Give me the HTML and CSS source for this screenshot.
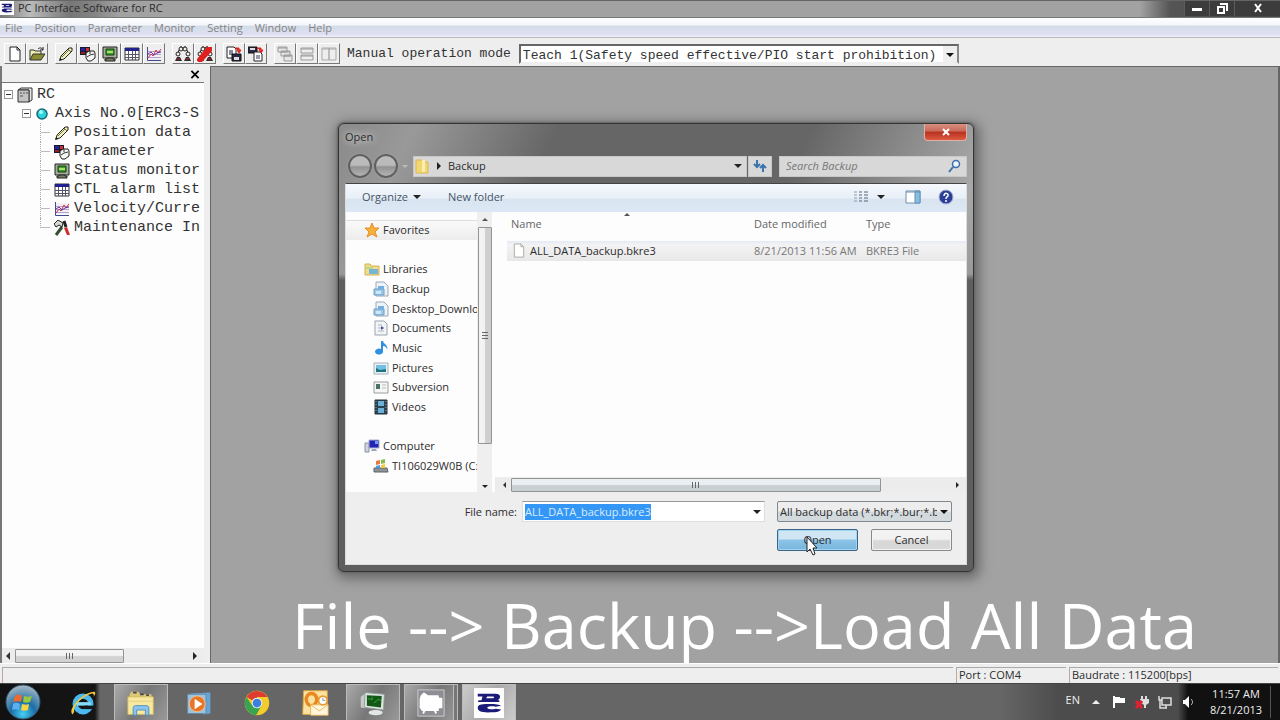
FILE: index.html
```html
<!DOCTYPE html>
<html lang="en">
<head>
    <meta charset="UTF-8">
    <title>PC Interface Software for RC</title>
    <link rel="stylesheet" href="styles.css">
</head>
<body>
    <!-- Icons used both in the toolbar and in the tree -->
    <svg class="sprite" aria-hidden="true">
        <symbol id="i-pencil" viewBox="0 0 16 16">
            <path d="M2 14l1-4 8-8h3v3l-8 8z" fill="#f2f0c0" stroke="#222"/>
            <path d="M4 11l7-7M10 3l3 3" stroke="#77763a" fill="none"/>
            <path d="M1 15l1-3 2 2z" fill="#111"/>
        </symbol>
        <symbol id="i-param" viewBox="0 0 16 16">
            <path d="M0 1h10v8H0z" fill="#181830"/>
            <path d="M1 2h4v3H1z" fill="#24249c"/><path d="M6 2h3v3H6z" fill="#d23030"/><path d="M1 6h4v2H1z" fill="#902020"/>
            <path d="M6 7l3-2h5l1 2v5l-4 3H8l-2-3z" fill="#f6f6f2" stroke="#222"/>
            <path d="M7 11l3-2 4-1M10 5v3" stroke="#333" fill="none"/>
        </symbol>
        <symbol id="i-monitor" viewBox="0 0 16 16">
            <path d="M1 1h14v11H1z" fill="#a9ad9c" stroke="#222"/>
            <path d="M4 3h8v6H4z" fill="#3fa02c" stroke="#123c10"/>
            <path d="M5 5h6v2H5z" fill="#a8e070"/>
            <path d="M5 12h6v1h2v2H3v-2h2z" fill="#7b7f60" stroke="#222"/>
        </symbol>
        <symbol id="i-table" viewBox="0 0 16 16">
            <path d="M1 2h14v12H1z" fill="#fff" stroke="#333"/>
            <path d="M1 2h14v3H1z" fill="#22228c"/>
            <path d="M1 8.500h14M1 11.500h14M4.500 5v9M8.500 5v9M11.500 5v9" stroke="#556" fill="none"/>
        </symbol>
        <symbol id="i-graph" viewBox="0 0 16 16">
            <path d="M1 2h14v11H1z" fill="#f3eef6"/>
            <path d="M1 5.500h14M1 8.500h14M1 11.500h14" stroke="#b6a4c8" fill="none"/>
            <path d="M1.500 1v13.500H15" stroke="#444a90" fill="none"/>
            <path d="M2 12l3-4 2 2 3-6 2 3 3-4" stroke="#d03048" fill="none"/>
            <path d="M2 8l3-2 3 3 3-2 4-1" stroke="#5a3aa8" fill="none"/>
        </symbol>
        <symbol id="i-robots" viewBox="0 0 16 16">
            <g fill="#f4f0e8" stroke="#222"><path d="M5 1h2v3H4l-1 3 1 2M11 1H9v3h3l1 3-1 2"/><circle cx="6" cy="3" r="2"/><circle cx="10" cy="3" r="2"/><circle cx="3" cy="8" r="2"/><circle cx="13" cy="8" r="2"/></g>
            <path d="M0 15l2-4h3l2 4zM9 15l2-4h3l2 4z" fill="#2a2a2a"/>
            <path d="M2 13h3M11 13h3" stroke="#c23" fill="none"/>
        </symbol>
        <symbol id="i-library" viewBox="0 0 16 16">
            <path d="M3 1h8l4 4v10H3z" fill="#eef3f8" stroke="#9aa9b8"/>
            <path d="M1 8h10v6H1z" fill="#9cc8ea" stroke="#6f9fc6"/>
            <path d="M5 5h6v3H5z" fill="#74aede"/><path d="M3 10h5v3H3z" fill="#cfe6f7"/>
        </symbol>
        <symbol id="i-rc" viewBox="0 0 32 32">
            <path d="M0 0h32v32H0z" fill="#fff"/>
            <path d="M4 6h19c6 0 6 5 2 7h2v2H4l1-2h3l1-4H4zM14 9l-1 2h7c2 0 2-2 0-2z" fill="#1a1a78" fill-rule="evenodd"/>
            <path d="M29 19c-3-2-9-2-14-2-8 0-11 1-11 4s3 5 11 5 11 0 14-3l-6-1c-2 1-8 1-9-1 1-2 7-2 9-1z" fill="#1a1a78"/>
        </symbol>
    </svg>

    <header class="title-bar">
        <svg class="app-icon" aria-hidden="true"><use href="#i-rc"/></svg>
        <h1>PC Interface Software for RC</h1>
        <div class="window-buttons">
            <button type="button" aria-label="Minimize"><svg viewBox="0 0 12 12"><path d="M1 5h10v3H1z" fill="#fff"/></svg></button>
            <button type="button" aria-label="Restore"><svg viewBox="0 0 12 12"><path d="M4 1h7v7M2 4h6v6H2z" stroke="#fff" stroke-width="2" fill="none"/></svg></button>
            <button type="button" class="wide" aria-label="Close"><svg viewBox="0 0 12 12"><path d="M3 1l6 8M9 1l-6 8" stroke="#fff" stroke-width="2" fill="none"/></svg></button>
        </div>
    </header>

    <nav class="menu-bar">
        <a href="#">File</a>
        <a href="#">Position</a>
        <a href="#">Parameter</a>
        <a href="#">Monitor</a>
        <a href="#">Setting</a>
        <a href="#">Window</a>
        <a href="#">Help</a>
    </nav>

    <div class="toolbar">
        <div class="tool-group">
            <button type="button" aria-label="New"><svg viewBox="0 0 16 16"><path d="M3 1h7l3 3v11H3z" fill="#fff" stroke="#222"/><path d="M10 1v3h3" fill="none" stroke="#222"/></svg></button>
            <button type="button" aria-label="Open file"><svg viewBox="0 0 16 16"><path d="M1 14V4h4l1 1h6v3" fill="#eeeeb0" stroke="#333"/><path d="M1 14l3-6h12l-4 6z" fill="#8a8a30" stroke="#333"/><path d="M9 3c2-2 4-1 5 1m0-3v3h-3" stroke="#222" fill="none"/></svg></button>
        </div>
        <div class="tool-group">
            <button type="button" aria-label="Position data"><svg><use href="#i-pencil"/></svg></button>
            <button type="button" aria-label="Parameter"><svg><use href="#i-param"/></svg></button>
            <button type="button" aria-label="Status monitor"><svg><use href="#i-monitor"/></svg></button>
            <button type="button" aria-label="Alarm list"><svg><use href="#i-table"/></svg></button>
            <button type="button" aria-label="Velocity"><svg><use href="#i-graph"/></svg></button>
        </div>
        <div class="tool-group">
            <button type="button" aria-label="Connect axes"><svg><use href="#i-robots"/></svg></button>
            <button type="button" aria-label="Disconnect axes"><svg viewBox="0 0 16 16"><use href="#i-robots"/><path d="M0 13L10 1h5v4L5 16H1z" fill="#e02020"/></svg></button>
        </div>
        <div class="tool-group">
            <button type="button" aria-label="Backup"><svg viewBox="0 0 16 16"><path d="M1 1h7l2 2v9H1z" fill="#fff" stroke="#222"/><path d="M3 4h4v5H3z" fill="#889"/><path d="M6 8h9v7H6z" fill="#2a2a48" stroke="#111"/><path d="M8 11h5v3H8z" fill="#ddd"/><path d="M9 2h4v3M11 4l2 3 2-3z" stroke="#d22" fill="#d22"/></svg></button>
            <button type="button" aria-label="Restore backup"><svg viewBox="0 0 16 16"><path d="M0 1h9v6H0z" fill="#2a2a48" stroke="#111"/><path d="M2 2h5v2H2z" fill="#ddd"/><path d="M6 6h6l2 2v7H6z" fill="#fff" stroke="#222"/><path d="M8 9h4v4H8z" fill="#99a"/><path d="M9 2h4v3M11 4l2 3 2-3z" stroke="#d22" fill="#d22"/></svg></button>
        </div>
        <div class="tool-group">
            <button type="button" aria-label="Cascade"><svg viewBox="0 0 16 16" fill="#e6e6e6" stroke="#999"><path d="M1 1h9v5H1zM4 5h9v5H4zM7 9h8v6H7z"/><path d="M1 2h9M4 6h9M7 10h8"/></svg></button>
            <button type="button" aria-label="Tile horizontally"><svg viewBox="0 0 16 16" fill="#eee" stroke="#999"><path d="M2 2h12v5H2zM2 9h12v5H2z"/><path d="M2 3h12M2 10h12"/></svg></button>
            <button type="button" aria-label="Tile vertically"><svg viewBox="0 0 16 16" fill="#eee" stroke="#aaa"><path d="M1 2h7v12H1zM8 2h7v12H8z"/><path d="M1 3h14"/></svg></button>
        </div>
        <label class="mode-label" for="mode">Manual operation mode</label>
        <select id="mode" class="mode-select">
            <option>Teach 1(Safety speed effective/PIO start prohibition)</option>
        </select>
    </div>

    <main class="workspace">
        <aside class="tree-panel">
            <div class="tree-head">
                <button type="button" class="tree-close" aria-label="Close panel"><svg viewBox="0 0 10 10"><path d="M1 1l8 8M9 1L1 9" stroke="#000" stroke-width="2"/></svg></button>
            </div>
            <div class="tree">
                <ul>
                    <li>
                        <div class="node"><span class="toggle"></span><svg viewBox="0 0 16 16"><path d="M1 3l3-2h11v12l-3 2V3z" fill="#e8e8e8" stroke="#333"/><path d="M1 3h11v12H1z" fill="#c4c4c4" stroke="#333"/><path d="M3 6h2M6 6h2M9 6h2M3 9h3" stroke="#555"/></svg><span>RC</span></div>
                        <ul>
                            <li>
                                <div class="node"><span class="toggle"></span><svg viewBox="0 0 16 16"><circle cx="7" cy="8" r="5" fill="#2cd4dc" stroke="#146a78" stroke-width="1.500"/><circle cx="6" cy="6" r="2" fill="#a6fafc"/></svg><span>Axis No.0[ERC3-S</span></div>
                                <ul class="leaves">
                                    <li class="node"><svg><use href="#i-pencil"/></svg><span>Position data</span></li>
                                    <li class="node"><svg><use href="#i-param"/></svg><span>Parameter</span></li>
                                    <li class="node"><svg><use href="#i-monitor"/></svg><span>Status monitor</span></li>
                                    <li class="node"><svg><use href="#i-table"/></svg><span>CTL alarm list</span></li>
                                    <li class="node"><svg><use href="#i-graph"/></svg><span>Velocity/Curre</span></li>
                                    <li class="node"><svg viewBox="0 0 16 16"><path d="M2 15l6-8" stroke="#345030" stroke-width="3"/><path d="M0 4l4-4 5 3-1 4-3-2-3 2z" fill="#d8d8d0" stroke="#222"/><path d="M10 1l2 6" stroke="#222" stroke-width="3"/><path d="M10 8l3-1 3 8h-3z" fill="#d02c28"/></svg><span>Maintenance In</span></li>
                                </ul>
                            </li>
                        </ul>
                    </li>
                </ul>
            </div>
            <div class="scroll-h tree-scroll">
                <span class="arrow left"></span>
                <div class="track"><div class="thumb"></div></div>
                <span class="arrow right"></span>
            </div>
        </aside>
        <section class="mdi">
            <p class="caption">File --&gt; Backup --&gt;Load All Data</p>
        </section>
    </main>

    <footer class="status-bar">
        <span class="cell grow"></span>
        <span class="cell port">Port : COM4</span>
        <span class="cell baud">Baudrate : 115200[bps]</span>
    </footer>

    <div class="taskbar">
        <button type="button" class="start" aria-label="Start">
            <svg viewBox="0 0 36 36">
                <defs><radialGradient id="orb" cx=".5" cy=".85" r=".8"><stop offset="0" stop-color="#45d0f6"/><stop offset=".45" stop-color="#1b6da6"/><stop offset="1" stop-color="#9db4c2"/></radialGradient></defs>
                <circle cx="18" cy="18" r="17" fill="url(#orb)" stroke="#355468"/>
                <path d="M10 12c3-2 5-2 7 0l-1 6c-3-1-5-1-8 0z" fill="#ea6a30"/><path d="M19 12c3 1 5 1 8 0l-2 6c-2 1-5 1-7 0z" fill="#98c83c"/>
                <path d="M8 20c3-2 5-1 7 0l-1 6c-3-1-5-1-7 0z" fill="#5cb0ee"/><path d="M17 20c3 1 5 1 7 0l-1 6c-2 1-5 1-7 0z" fill="#fad440"/>
            </svg>
        </button>
        <button type="button" class="task" aria-label="Internet Explorer"><svg viewBox="0 0 32 32"><circle cx="16" cy="17" r="9" fill="none" stroke="#4cb8ee" stroke-width="6"/><path d="M9 15h16v4H9z" fill="#86dcfa"/><path d="M18 19h12v4H18z" fill="#15191c"/><path d="M4 29C-2 24 14 4 29 3c2 1 1 3-1 6 1-3 0-4-2-4C15 8 4 20 6 26z" fill="#f0c83c"/></svg></button>
        <button type="button" class="task open" aria-label="Windows Explorer"><svg viewBox="0 0 32 32"><path d="M3 6l2-3h8l2 3h13v21H3z" fill="#dcc878"/><path d="M1 9h29v20H1z" fill="#f7e9a0" stroke="#d2b858"/><path d="M1 14h29" stroke="#e2cd7c"/><path d="M7 30v-8c0-2 1-3 3-3h12c2 0 3 1 3 3v8h-4v-6H11v6z" fill="#88c4ee" stroke="#4c88c0"/><path d="M7 4h4M15 6h4M22 7h3" stroke="#444" stroke-width="2"/></svg></button>
        <button type="button" class="task" aria-label="Media Player"><svg viewBox="0 0 32 32"><path d="M6 5l23-1v24l-8 1z" fill="#68a4d4"/><path d="M3 6h21v22H3z" fill="#9cc4de" stroke="#6088a8"/><circle cx="14" cy="17" r="9" fill="#e87424" stroke="#f8c090"/><path d="M11 11l9 6-9 6z" fill="#fff"/></svg></button>
        <button type="button" class="task" aria-label="Chrome"><svg viewBox="0 0 32 32"><circle cx="16" cy="16" r="14" fill="#f6cc2c"/><path d="M16 16L4 9A14 14 0 0 1 28 9H16z" fill="#de3c30"/><path d="M4 9A14 14 0 0 0 15 30l6-11-5-3-6 2z" fill="#38a450"/><circle cx="16" cy="16" r="6" fill="#f4f4f4"/><circle cx="16" cy="16" r="5" fill="#3c80dc"/></svg></button>
        <button type="button" class="task" aria-label="Outlook"><svg viewBox="0 0 32 32"><path d="M3 2h27v27H2z" fill="#fbe2a0" stroke="#e4a83c"/><ellipse cx="12" cy="12" rx="6" ry="7" fill="none" stroke="#e88820" stroke-width="4"/><path d="M11 18h20v12H11z" fill="#fff6dc" stroke="#e8b454"/><path d="M11 18l10 7 10-7" fill="none" stroke="#e8b454"/><circle cx="25" cy="13" r="5" fill="#fff" stroke="#e49c34" stroke-width="2"/><path d="M25 10v3h3" stroke="#888" fill="none"/></svg></button>
        <button type="button" class="task open" aria-label="System monitor"><svg viewBox="0 0 32 32"><path d="M2 9l6-5v18l-6-1z" fill="#c8ccc8"/><path d="M7 4l22 2-1 18-22-3z" fill="#dfe4df" stroke="#899"/><path d="M9 7l17 1-1 13-16-2z" fill="#145818"/><path d="M10 11l5 1v-3M17 16l5-4 3 1" stroke="#30b040" fill="none"/><ellipse cx="19" cy="27" rx="8" ry="3" fill="#e4e8e4"/></svg></button>
        <button type="button" class="task open stacked" aria-label="Recorder"><svg viewBox="0 0 32 32"><path d="M1 1h30v30H1z" fill="#8e8e94" stroke="#d4d4d4"/><path d="M5 8l3-3 4 3h12v3h4v10h-4v3H6l-2-3v-9z" fill="#fff" stroke="#fff" stroke-linejoin="round" stroke-width="2"/><path d="M9 24l-2 4M20 24l2 4" stroke="#fff" stroke-width="2"/></svg></button>
        <button type="button" class="task open front" aria-label="PC Interface Software"><svg><use href="#i-rc"/></svg></button>

        <div class="tray">
            <span class="lang">EN</span>
            <svg viewBox="0 0 14 14"><path d="M3 9l4-4 4 4z" fill="#eee"/></svg>
            <svg viewBox="0 0 14 14"><path d="M1 1h2v12H1zM3 2h5v6H3zM8 3h5v5H8z" fill="#fff"/></svg>
            <svg viewBox="0 0 14 14"><path d="M6 1h2v3H6zM10 1h2v3h-2zM5 4h9v4l-3 2v3H9v-3L6 8z" fill="#ddd"/><path d="M1 6l6 7M7 6l-6 7" stroke="#e02030" stroke-width="3"/></svg>
            <svg viewBox="0 0 14 14"><path d="M4 3h9v7H4zM1 1v4h3M2 5v8h7M8 10v3" fill="none" stroke="#ddd" stroke-width="1.500"/></svg>
            <svg viewBox="0 0 14 14"><path d="M2 5h2l4-4v12L4 9H2z" fill="#fff"/><path d="M10 4c2 2 2 4 0 6" fill="none" stroke="#ccc"/></svg>
            <time class="clock" datetime="2013-08-21T11:57">11:57 AM<br>8/21/2013</time>
        </div>
    </div>

    <!-- Open dialog -->
    <form class="dialog" role="dialog" aria-labelledby="dialog-title">
        <div class="dialog-title">
            <h2 id="dialog-title">Open</h2>
            <button type="button" class="dialog-close" aria-label="Close"><svg viewBox="0 0 10 10"><path d="M2 2l6 6M8 2L2 8" stroke="#fff" stroke-width="2"/></svg></button>
        </div>
        <div class="dialog-nav">
            <button type="button" class="round" aria-label="Back"></button>
            <button type="button" class="round" aria-label="Forward"></button>
            <span class="arrow down faint"></span>
            <div class="address">
                <svg viewBox="0 0 16 16"><path d="M2 2h6l1 2h5v11H2z" fill="#f2d674" stroke="#dcb850"/><path d="M8 2h3v12H8z" fill="#fbeeb0"/></svg>
                <span class="arrow right"></span>
                <a href="#">Backup</a>
                <span class="arrow down push"></span>
            </div>
            <button type="button" class="refresh" aria-label="Refresh"><svg viewBox="0 0 16 16"><path d="M5 2v7M2 6l3 3 3-3M11 14V7M8 10l3-3 3 3" stroke="#3b74ae" stroke-width="2" fill="none"/></svg></button>
            <div class="search">
                <input type="text" aria-label="Search Backup" placeholder="Search Backup">
                <svg viewBox="0 0 14 14"><circle cx="8" cy="5" r="3.500" fill="#eef4fa" stroke="#3b6ea8" stroke-width="1.500"/><path d="M5 8l-4 5" stroke="#3b6ea8" stroke-width="2"/></svg>
            </div>
        </div>

        <div class="dialog-body">
            <div class="dialog-tools">
                <button type="button">Organize <span class="arrow down"></span></button>
                <button type="button">New folder</button>
                <button type="button" class="views" aria-label="Change view"><svg viewBox="0 0 16 16"><path d="M1 3h3M1 6h3M1 9h3M1 12h3" stroke="#8a9aac"/><path d="M6 3h3M11 3h4M6 6h3M11 6h4M6 9h3M11 9h4M6 12h3M11 12h4" stroke="#56677c"/></svg><span class="arrow down"></span></button>
                <button type="button" aria-label="Preview pane"><svg viewBox="0 0 16 16"><path d="M1 2h14v12H1z" fill="#fff" stroke="#7090ac"/><path d="M10 2h5v12h-5z" fill="#86bede" stroke="#5c92ba"/><path d="M1 3h14" stroke="#7090ac"/></svg></button>
                <button type="button" class="help" aria-label="Help"><svg viewBox="0 0 16 16"><circle cx="8" cy="8" r="7" fill="#2b3f98" stroke="#a8b4d0"/><path d="M6 7c0-4 5-3 4 0-1 1-2 1-2 3M8 11v2" stroke="#fff" stroke-width="1.500" fill="none"/></svg></button>
            </div>

            <div class="panes">
                <ul class="places">
                    <li class="current"><svg viewBox="0 0 16 16"><path d="M8 1l2 5 5 0-4 4 2 5-5-3-5 3 2-5-4-4 5 0z" fill="#f8b03c" stroke="#e88c24"/></svg>Favorites</li>
                    <li class="spacer"></li>
                    <li><svg viewBox="0 0 16 16"><path d="M1 3h5l1 2h8v9H1z" fill="#f2dc84" stroke="#d0b054"/><path d="M5 8h9v5H5z" fill="#78b4d4"/><path d="M2 6h7v2H2z" fill="#b8d890"/></svg>Libraries</li>
                    <li class="sub"><svg><use href="#i-library"/></svg>Backup</li>
                    <li class="sub"><svg><use href="#i-library"/></svg>Desktop_Downlo</li>
                    <li class="sub"><svg viewBox="0 0 16 16"><path d="M2 1h9l3 3v11H2z" fill="#f2f4f6" stroke="#98a4ae"/><path d="M5 8h6M5 5h4M5 11h6" stroke="#a8b4c0"/><path d="M8 6l3 2-3 2z" fill="#445c88"/></svg>Documents</li>
                    <li class="sub"><svg viewBox="0 0 16 16"><path d="M8 1h2c0 3 6 4 4 9 0-3-2-4-4-4v6a4 3 0 1 1-2-3z" fill="#2e90de"/></svg>Music</li>
                    <li class="sub"><svg viewBox="0 0 16 16"><path d="M1 3h14v11H1z" fill="#eaf2f6" stroke="#a4b0b8"/><path d="M3 5h10v7H3z" fill="#74c0e2"/><path d="M3 12V8l4 2 6-1v3z" fill="#20747c"/></svg>Pictures</li>
                    <li class="sub"><svg viewBox="0 0 16 16"><path d="M1 3h14v11H1z" fill="#f6f6f4" stroke="#9ca0a0"/><path d="M3 5h4v5H3z" fill="#4a7468"/><path d="M9 6h4M9 9h4" stroke="#bbb"/></svg>Subversion</li>
                    <li class="sub"><svg viewBox="0 0 16 16"><path d="M2 1h12v14H2z" fill="#2c4450" stroke="#22323c"/><path d="M5 2h6v5H5zM5 9h6v5H5z" fill="#6cb0d8"/><path d="M3 2v12M13 2v12" stroke="#8aa0ac" stroke-dasharray="1 2"/></svg>Videos</li>
                    <li class="spacer"></li>
                    <li><svg viewBox="0 0 16 16"><path d="M1 5h4v9H1z" fill="#d0d4dc" stroke="#8c94a0"/><path d="M5 2h10v8H5z" fill="#2424b4" stroke="#a8b0cc"/><path d="M11 3h3v3h-3z" fill="#6ea0f4"/><path d="M8 11h4l1 2H7z" fill="#a0a8b8"/></svg>Computer</li>
                    <li class="sub"><svg viewBox="0 0 16 16"><path d="M1 10h13l1 4H1z" fill="#8c9498" stroke="#5c6468"/><path d="M3 3l4-1v4l-4 1z" fill="#e87840"/><path d="M8 2l4-1v4l-4 1z" fill="#84bc48"/><path d="M3 8l4-1v3H3z" fill="#4a98e0"/><path d="M8 7l4-1v4H8z" fill="#f4c840"/></svg>TI106029W0B (C:</li>
                </ul>
                <div class="scroll-v">
                    <span class="arrow up"></span>
                    <div class="track"><div class="thumb"></div></div>
                    <span class="arrow down"></span>
                </div>
                <div class="files">
                    <table>
                        <thead>
                            <tr><th class="col-name">Name<span class="arrow up sort"></span></th><th class="col-date">Date modified</th><th>Type</th></tr>
                        </thead>
                        <tbody>
                            <tr><td><svg viewBox="0 0 12 16"><path d="M1 1h7l3 3v11H1z" fill="#fff" stroke="#a8aca4"/><path d="M8 1v3h3" fill="none" stroke="#a8aca4"/></svg>ALL_DATA_backup.bkre3</td><td class="dim">8/21/2013 11:56 AM</td><td class="dim">BKRE3 File</td></tr>
                        </tbody>
                    </table>
                    <div class="scroll-h file-scroll">
                        <span class="arrow left"></span>
                        <div class="track"><div class="thumb"></div></div>
                        <span class="arrow right"></span>
                    </div>
                </div>
            </div>

            <div class="dialog-foot">
                <label for="file-name">File name:</label>
                <div class="file-combo">
                    <input type="text" id="file-name" value="ALL_DATA_backup.bkre3">
                    <span class="arrow down"></span>
                </div>
                <select class="filter" aria-label="File type">
                    <option>All backup data (*.bkr;*.bur;*.bu</option>
                </select>
                <div class="actions">
                    <button type="button" class="btn primary">Open</button>
                    <button type="button" class="btn">Cancel</button>
                </div>
            </div>
        </div>
        <svg class="cursor" viewBox="0 0 12 20" aria-hidden="true"><path d="M1 1v15l3-3 3 6 2-1-2-6h4z" fill="#fff" stroke="#222"/></svg>
    </form>

    <script>
        // The proposed file name starts out selected
        document.getElementById("file-name").select();
    </script>
</body>
</html>
```
FILE: styles.css
```css
* {
    box-sizing: border-box;
}

body {
    display: flex;
    flex-direction: column;
    min-height: 100vh;
    margin: 0;
    position: relative;
    overflow: hidden;
    background-color: #eee;
    color: #2c2c2c;
    font-family: "Open Sans", "Noto Sans", sans-serif;
    font-size: 11px;
    line-height: 16px;
}

button,
input,
select {
    margin: 0;
    padding: 0;
    border: none;
    background: none;
    color: inherit;
    font: inherit;
}

a {
    color: inherit;
    text-decoration: none;
}

ul {
    list-style: none;
    margin: 0;
    padding: 0;
}

svg {
    display: block;
    flex: none;
    width: 16px;
    height: 16px;
}

.sprite {
    position: absolute;
    width: 0;
    height: 0;
}

/* Small triangles */
.arrow {
    flex: none;
    width: 0;
    height: 0;
    border: 4px solid transparent;
}

.arrow.down {
    border-top-color: #222;
    border-bottom-width: 0;
}

.arrow.up {
    border-bottom-color: #555;
    border-top-width: 0;
}

.arrow.left {
    border-right-color: #333;
    border-left-width: 0;
}

.arrow.right {
    border-left-color: #222;
    border-right-width: 0;
}

.arrow.faint {
    border-width: 3px 3px 0;
    border-top-color: #bbb;
}

/* Main window */
.title-bar {
    display: flex;
    align-items: flex-start;
    height: 18px;
    border-top: 1px solid #666;
    border-bottom: 1px solid #777;
    background: linear-gradient(90deg, #777 0, #bbb 30px, #777 70px, #858585 95px, #a2a2a2 120px, #a2a2a2 calc(100% - 140px), #555 calc(100% - 110px), #444 100%);
}

.title-bar h1 {
    flex: 1;
    margin: 0 0 0 4px;
    font-size: 11px;
    font-weight: normal;
    line-height: 14px;
}

.app-icon {
    width: 14px;
    height: 14px;
}

.window-buttons {
    display: flex;
    height: 15px;
    background-color: #3c3c3c;
}

.window-buttons button {
    display: grid;
    place-items: center;
    width: 25px;
    border-left: 1px solid #5c5c5c;
}

.window-buttons .wide {
    width: 46px;
}

.window-buttons svg {
    width: 12px;
    height: 12px;
}

.menu-bar {
    display: flex;
    gap: 12px;
    height: 20px;
    padding: 0 5px;
    border-bottom: 1px solid #bbb;
    background: linear-gradient(#fff 0, #f4f6fa 35%, #d3dce8 45%, #dfe0f2 85%, #eef 100%);
    color: #858585;
    line-height: 19px;
}

.toolbar {
    display: flex;
    align-items: center;
    gap: 7px;
    height: 28px;
    padding: 3px 4px 0;
    color: #333;
    font-family: "Liberation Mono", monospace;
    font-size: 13px;
}

.tool-group {
    display: flex;
}

.tool-group button {
    display: grid;
    place-items: center;
    width: 22px;
    height: 21px;
    border: 1px solid #fff;
    border-right-color: #777;
    border-bottom-color: #777;
}

.mode-label {
    padding-right: 1px;
}

.mode-select {
    width: 440px;
    height: 20px;
    padding: 2px 0 0 2px;
    border: 2px solid #999;
    border-color: #666 #888 #eee #666;
    appearance: none;
    background: #fff url("data:image/svg+xml,%3Csvg xmlns='http://www.w3.org/2000/svg' viewBox='0 0 14 16'%3E%3Cpath d='M0 0h14v16H0z' fill='%23eee'/%3E%3Cpath d='M3 7h8l-4 4z' fill='%23111'/%3E%3C/svg%3E") no-repeat right / 14px 16px;
}

.workspace {
    display: flex;
    flex: 1;
}

.tree-panel {
    display: flex;
    flex-direction: column;
    width: 210px;
    padding-right: 6px;
    border-left: 2px solid #777;
}

.tree-head {
    display: flex;
    justify-content: flex-end;
    height: 17px;
    padding: 3px 4px;
    border-bottom: 1px solid #777;
}

.tree-close svg {
    width: 10px;
    height: 9px;
}

.tree {
    flex: 1;
    overflow: hidden;
    padding: 2px 0 0 2px;
    background-color: #fdfdfd;
    color: #333;
    font-family: "Liberation Mono", monospace;
    font-size: 15px;
    white-space: nowrap;
}

.tree ul ul {
    padding-left: 18px;
}

.node {
    display: flex;
    align-items: center;
    gap: 4px;
    height: 19px;
    line-height: 19px;
}

.toggle {
    display: grid;
    flex: none;
    place-items: center;
    width: 9px;
    height: 9px;
    border: 1px solid #999;
}

.toggle::before {
    content: "";
    width: 5px;
    height: 1px;
    background-color: #333;
}

.leaves .node::before {
    content: "";
    flex: none;
    width: 9px;
    height: 19px;
    border-left: 1px dotted #aaa;
    background: linear-gradient(#bbb, #bbb) no-repeat center / 100% 1px;
}

.leaves .node:last-child::before {
    height: 10px;
    margin-bottom: 9px;
    background-position: bottom;
}

.scroll-h {
    display: flex;
    align-items: center;
    gap: 5px;
    height: 15px;
    padding: 0 4px;
    background-color: #ececec;
}

.scroll-h .track,
.scroll-v .track {
    flex: 1;
}

.thumb {
    display: grid;
    place-items: center;
    border: 1px solid #949494;
    border-radius: 1px;
}

.scroll-h .thumb {
    height: 14px;
    background: linear-gradient(#f3f3f3 45%, #d2d2d2 55%);
}

.thumb::before {
    content: "";
    width: 7px;
    height: 6px;
    background: repeating-linear-gradient(90deg, #666 0 1px, transparent 1px 3px);
}

.tree-scroll .thumb {
    width: 63%;
}

.tree-scroll .arrow.right {
    margin-right: 3px;
}

.mdi {
    flex: 1;
    display: flex;
    align-items: flex-end;
    justify-content: center;
    border: 1px solid #666;
    border-width: 1px 2px 0 1px;
    background-color: #a2a2a2;
}

.caption {
    margin: 0;
    color: #fff;
    font-size: 63px;
    line-height: 76px;
    white-space: nowrap;
}

.status-bar {
    display: flex;
    gap: 3px;
    height: 20px;
    padding: 3px 2px 0;
    border-top: 1px solid #fff;
}

.cell {
    height: 17px;
    padding-left: 2px;
    border-top: 1px solid #aaa;
    border-left: 1px solid #b8a8a8;
    line-height: 14px;
}

.cell.grow {
    flex: 1;
}

.cell.port {
    width: 110px;
}

.cell.baud {
    width: 209px;
}

/* Taskbar */
.taskbar {
    display: flex;
    gap: 4px;
    height: 37px;
    border-top: 1px solid #444;
    background: linear-gradient(90deg, #111 0, #161616 95px, #666 100px, #666 1000px, #4c4c4c 1060px, #4c4c4c calc(100% - 102px), #111 calc(100% - 92px));
}

.start {
    width: 46px;
    margin-right: 6px;
}

.start svg {
    width: 36px;
    height: 36px;
    margin-left: 5px;
}

.task {
    display: grid;
    place-items: center;
    width: 54px;
    border: 1px solid transparent;
    border-bottom: none;
}

.task svg {
    width: 28px;
    height: 28px;
}

.task.open {
    border-color: #bbb;
    background: linear-gradient(120deg, #aaa, #777 50%, #999);
}

.task.stacked {
    box-shadow: inset -3px 0 #777, inset -4px 0 #bbb;
}

.task.front {
    background: linear-gradient(120deg, #ccc, #aaa 50%, #ccc);
}

.task.front svg {
    width: 30px;
    height: 30px;
}

.tray {
    display: flex;
    align-items: center;
    gap: 9px;
    margin-left: auto;
    padding-right: 9px;
    color: #eee;
}

.tray svg {
    width: 14px;
    height: 14px;
}

.lang {
    padding-bottom: 4px;
    font-size: 11px;
}

.clock {
    width: 67px;
    padding-right: 2px;
    border-right: 1px solid #555;
    text-align: center;
}

/* Open dialog */
.dialog {
    position: absolute;
    top: 123px;
    left: 338px;
    width: 636px;
    padding: 0 6px 6px;
    border: 1px solid #333;
    border-radius: 6px;
    background: linear-gradient(transparent 150px, #5f5f5f 156px), linear-gradient(115deg, #8a8a8a 0, #999 70px, #666 200px, #666 430px, #a8a8a8 600px, #888 680px);
    box-shadow: 0 0 2px 1px #666, 2px 3px 12px 4px #6c6c6c;
}

.dialog-title {
    display: flex;
    align-items: flex-start;
    justify-content: space-between;
    height: 27px;
}

.dialog-title h2 {
    margin: 5px 0 0;
    font-size: 11px;
    font-weight: normal;
    text-shadow: 0 0 6px #ddd, 0 0 8px #ccc;
}

.dialog-close {
    display: grid;
    place-items: center;
    width: 43px;
    height: 17px;
    border: 1px solid #ddb0a8;
    border-top: none;
    border-radius: 0 0 4px 4px;
    background: linear-gradient(#d89080 0, #c86858 45%, #b83020 50%, #dc5c40 100%);
}

.dialog-close svg {
    width: 10px;
    height: 10px;
}

.dialog-nav {
    display: flex;
    align-items: center;
    height: 32px;
    padding: 0 0 2px 3px;
}

.round {
    width: 24px;
    height: 24px;
    margin-right: 2px;
    border: 2px solid #606060;
    border-radius: 50%;
    background: linear-gradient(#bbb 45%, #939393 55%, #b4b4b4);
    box-shadow: 0 0 1px #ccc;
}

.dialog-nav .faint {
    margin: 0 5px 0 2px;
}

.address,
.refresh,
.search {
    height: 21px;
    border: 1px solid #c8c8c8;
    background-color: #d8d8d8;
}

.address {
    display: flex;
    flex: 1;
    align-items: center;
    gap: 7px;
    padding: 0 4px 0 0;
}

.address .push {
    margin-left: auto;
}

.refresh {
    display: grid;
    place-items: center;
    width: 24px;
    margin-left: 1px;
}

.search {
    display: flex;
    align-items: center;
    width: 188px;
    margin-left: 7px;
    padding: 0 4px 0 6px;
}

.search input {
    flex: 1;
    min-width: 0;
}

.search input::placeholder {
    color: #777;
    font-style: italic;
}

.search svg {
    width: 14px;
    height: 14px;
}

.dialog-body {
    border: 1px solid #ddd;
    border-top-color: #444;
    background-color: #eee;
}

.dialog-tools {
    display: flex;
    align-items: center;
    gap: 20px;
    height: 28px;
    padding: 0 12px 2px 16px;
    background: linear-gradient(#f6f9fd 0, #e8eff8 50%, #dae4f1 55%, #dce8f5 100%);
    color: #445566;
}

.dialog-tools button {
    display: flex;
    align-items: center;
    gap: 5px;
}

.dialog-tools button:nth-child(2) {
    padding-left: 7px;
}

.dialog-tools .views {
    gap: 8px;
    margin-left: auto;
}

.help {
    margin-left: -3px;
}

.panes {
    display: flex;
    height: 280px;
    background-color: #fdfdfd;
}

.places {
    display: grid;
    grid-template-rows: repeat(13, 1fr);
    width: 131px;
    margin: 8px 0 16px;
    overflow: hidden;
    white-space: nowrap;
}

.places li {
    display: flex;
    align-items: center;
    gap: 3px;
    padding-left: 18px;
}

.places .sub {
    padding-left: 27px;
}

.places .current {
    border-top: 1px solid #ddd;
    background: linear-gradient(#fafafa, #ececec);
}

.scroll-v {
    display: flex;
    flex-direction: column;
    align-items: center;
    gap: 6px;
    width: 15px;
    padding: 6px 0 4px;
    background-color: #efefef;
}

.scroll-v .thumb {
    width: 14px;
    height: 86%;
    background: linear-gradient(90deg, #f3f3f3 45%, #cfcfcf 55%);
}

.scroll-v .thumb::before {
    width: 6px;
    height: 7px;
    background: repeating-linear-gradient(#666 0 1px, transparent 1px 3px);
}

.scroll-v .arrow,
.file-scroll .arrow {
    border-width: 3px;
}

.scroll-v .arrow.up {
    border-top-width: 0;
}

.scroll-v .arrow.down {
    border-bottom-width: 0;
}

.files {
    display: flex;
    flex: 1;
    flex-direction: column;
    justify-content: space-between;
    padding: 0 0 0 3px;
}

.files table {
    margin-left: 12px;
    border-collapse: collapse;
    table-layout: fixed;
}

.files th {
    height: 29px;
    padding: 0 4px 5px;
    color: #666;
    font-weight: normal;
    text-align: left;
}

.files .col-name {
    position: relative;
    width: 243px;
}

.files .col-date {
    width: 112px;
}

.sort {
    position: absolute;
    top: 1px;
    left: 48%;
    border-width: 0 3px 3px;
    border-bottom-color: #999;
}

.files tbody tr {
    background: linear-gradient(#e4eaf5 0, #f3f3f3 20%, #e8e8e8 100%);
}

.files td {
    height: 20px;
    padding: 0 4px;
}

.files td svg {
    float: left;
    width: 12px;
    height: 15px;
    margin: 0 5px 0 2px;
}

.files .dim {
    color: #777;
}

.file-scroll {
    padding: 0 4px 0 5px;
}

.file-scroll .thumb {
    width: 84%;
    background: linear-gradient(#eaeff1 45%, #c9d0d4 55%);
}

.dialog-foot {
    display: grid;
    grid-template-columns: 172px 1fr 175px;
    gap: 7px 0;
    padding: 9px 14px 13px 0;
}

.dialog-foot label {
    padding-right: 1px;
    line-height: 21px;
    text-align: right;
}

.file-combo {
    display: flex;
    align-items: center;
    margin: 0 12px 0 4px;
    padding: 0 3px 0 2px;
    border: 1px solid #ddd;
    border-top-color: #999;
    background-color: #fff;
}

.file-combo input {
    flex: 1;
    outline: none;
}

.file-combo input::selection {
    background-color: #3597f5;
    color: #d8ecff;
}

.filter {
    width: 100%;
    height: 21px;
    padding: 0 14px 0 2px;
    border: 1px solid #808890;
    border-radius: 2px;
    appearance: none;
    background: url("data:image/svg+xml,%3Csvg xmlns='http://www.w3.org/2000/svg' viewBox='0 0 16 16'%3E%3Cpath d='M5 6h8l-4 4z' fill='%23111'/%3E%3C/svg%3E") no-repeat right / 16px 16px, linear-gradient(#ededed 45%, #d3dade 55%);
}

.actions {
    display: flex;
    grid-column: 3;
    justify-content: space-between;
}

.btn {
    width: 81px;
    height: 22px;
    border: 1px solid #888;
    border-radius: 2px;
    background: linear-gradient(#f2f2f2 45%, #d8d8d8 55%);
    box-shadow: inset 0 0 0 1px #f4f4f4;
}

.btn.primary {
    border-color: #3c6484;
    background: linear-gradient(#d0e6f4 45%, #8cc4e8 50%, #78b4dc);
    box-shadow: inset 0 0 0 1px #a0d4f0;
}

.cursor {
    position: absolute;
    top: 412px;
    left: 467px;
    width: 12px;
    height: 20px;
}
```
